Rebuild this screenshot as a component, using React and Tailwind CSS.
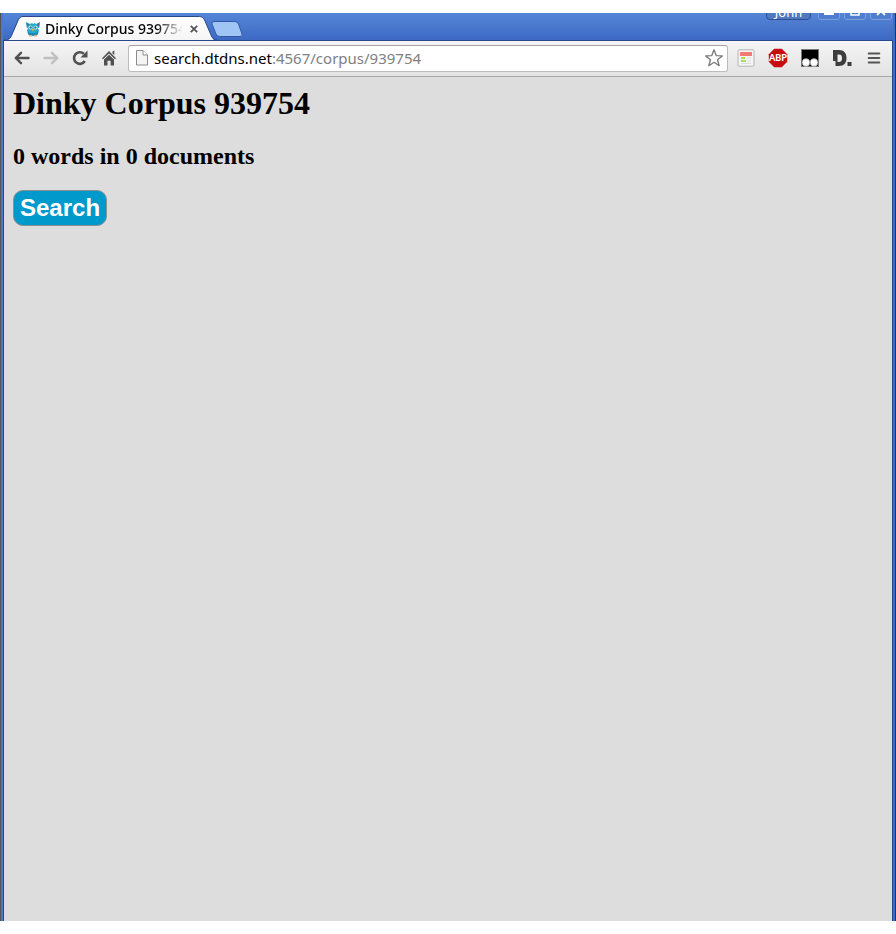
import React from "react";

function TabShape() {
  return (
    <svg className="absolute left-0 top-0" width="214" height="25" viewBox="0 0 214 25" aria-hidden="true">
      <defs>
        <linearGradient id="tab" x1="0" y1="0" x2="0" y2="1">
          <stop offset="0" stopColor="#ffffff" />
          <stop offset="1" stopColor="#f5f5f5" />
        </linearGradient>
      </defs>
      <path
        d="M0 25 V24 C4 24 6 23.500 7.500 20 L14 5 C15.500 1.500 17 .5 20 .5 H194 C198 .5 199.500 1.500 201 5 L207 19 C208.500 23 209.500 24.500 213 24.500 V25 Z"
        fill="url(#tab)"
      />
      <path
        d="M0 24 C4 24 6 23 7.500 19.500 L14 4.500 C15.500 1 17 .5 20 .5 H194 C198 .5 199.500 1.500 201 5 L207 19 C208.500 22.500 210 24 213 24"
        fill="none"
        stroke="#27488c"
      />
    </svg>
  );
}

function Furby() {
  return (
    <svg width="16" height="16" viewBox="0 0 16 16" aria-hidden="true">
      <path d="M1 1 L5 3 L7 2 L8 3 L9.500 2 L11 3 L15 1 L14.500 6 L13 7.500 L14 9.500 L13 13 L11 15 H5 L3 13 L2 9.500 L3 7.500 L1.500 6 Z" fill="#27a9cd" />
      <path d="M1.500 1.500 L4 3.500 L2.500 5.500 Z M14.500 1.500 L12 3.500 L13.500 5.500 Z" fill="#6e5c78" />
      <path d="M3 10 V13 L5 14.500 H11 L13 13 V10 L11 12 H5 Z" fill="#168bb5" />
      <circle cx="5.500" cy="6.500" r="2" fill="#d5f1f7" />
      <circle cx="10.500" cy="6.500" r="2" fill="#d5f1f7" />
      <circle cx="5.700" cy="6.500" r="1.200" fill="#278397" />
      <circle cx="10.300" cy="6.500" r="1.200" fill="#278397" />
      <path d="M6.500 8 H9.500 L8 10.500 Z" fill="#f5b31f" />
      <path d="M4 14 H7 V15.500 H4 Z M9 14 H12 V15.500 H9 Z" fill="#dfb27d" />
    </svg>
  );
}

function WindowButton({ label, children }) {
  return (
    <button aria-label={label} className="flex h-[20px] w-[22px] items-end justify-center rounded-b-[3px] border border-[#7f9fd8] bg-[#4f7dd0] pb-[3px]">
      {children}
    </button>
  );
}

function TitleBar() {
  return (
    <header className="flex h-[28px] items-end justify-between overflow-hidden border-b border-[#27488c] bg-gradient-to-b from-[#5586d6] to-[#3d69c4] pl-px pr-px">
      <div className="-mb-px flex items-end">
        <div className="relative h-[25px] w-[209px]">
          <TabShape />
          <div className="relative flex h-[26px] items-center pl-[21px]">
            <Furby />
            <span className="ml-[4px] w-[138px] overflow-hidden whitespace-nowrap bg-gradient-to-r from-black from-80% to-transparent bg-clip-text font-['Noto_Sans','Open_Sans',sans-serif] text-[14px] font-medium leading-[20px] text-transparent">
              Dinky Corpus 939754
            </span>
            <button aria-label="Close tab" className="ml-[6px] flex size-[10px] items-center justify-center">
              <svg width="8" height="8" viewBox="0 0 8 8" stroke="#555" strokeWidth="1.800">
                <path d="M.8 .8 L7.200 7.200 M7.200 .8 L.8 7.200" />
              </svg>
            </button>
          </div>
        </div>
        <button aria-label="New tab" className="mb-[4px] -ml-[3px]">
          <svg width="34" height="16" viewBox="0 0 34 16">
            <path d="M4 .5 H25 Q27.500 .5 28.500 3 L32 13 Q33 15.500 30 15.500 H10 Q7 15.500 6 13 L2 3 Q1.500 .5 4 .5 Z" fill="#9fc5f4" stroke="#3159a8" />
          </svg>
        </button>
      </div>
      <div className="mb-[20px] flex items-end gap-[4px]">
        <button className="mr-[3px] flex h-[20px] w-[45px] items-end justify-center rounded-b-[4px] border border-[#2c4d91] bg-[#5079c0] font-['Noto_Sans','Open_Sans',sans-serif] text-[13px] leading-[14px] text-white">
          John
        </button>
        <WindowButton label="Minimize">
          <svg width="10" height="4"><path d="M0 0 H10 V3 H0 Z" fill="#fff" /></svg>
        </WindowButton>
        <WindowButton label="Maximize">
          <svg width="10" height="9" fill="none" stroke="#fff" strokeWidth="1.500"><rect x="1" y="1" width="8" height="7" /></svg>
        </WindowButton>
        <WindowButton label="Close">
          <svg width="10" height="10" stroke="#fff" strokeWidth="1.800"><path d="M1 1 L9 9 M9 1 L1 9" /></svg>
        </WindowButton>
      </div>
    </header>
  );
}

function Tool({ label, children, disabled }) {
  return (
    <button aria-label={label} disabled={disabled} className="flex size-[20px] shrink-0 items-center justify-center">
      {children}
    </button>
  );
}

function Toolbar() {
  return (
    <div className="flex h-[36px] items-center border-b border-[#a8a8a8] bg-gradient-to-b from-[#f5f5f5] to-[#e3e3e3] pb-px pl-[8px] pr-[8px]">
      <nav className="flex gap-[9px]">
        <Tool label="Back">
          <svg width="16" height="14" viewBox="0 0 16 14" fill="none" stroke="#505050" strokeWidth="2.400" strokeLinecap="round">
            <path d="M2 7 H14.500" /><path d="M7 1.800 L1.800 7 L7 12.200" strokeLinejoin="round" />
          </svg>
        </Tool>
        <Tool label="Forward" disabled>
          <svg width="16" height="14" viewBox="0 0 16 14" fill="none" stroke="#c0c0c0" strokeWidth="2.400" strokeLinecap="round">
            <path d="M1.500 7 H14" /><path d="M9 1.800 L14.200 7 L9 12.200" strokeLinejoin="round" />
          </svg>
        </Tool>
        <Tool label="Reload">
          <svg width="16" height="16" viewBox="0 0 16 16">
            <path d="M12.800 11 A5.800 5.800 0 1 1 11.800 3.800" fill="none" stroke="#505050" strokeWidth="2.600" />
            <path d="M15.500 .5 V7.500 H8.500 Z" fill="#505050" />
          </svg>
        </Tool>
        <Tool label="Home">
          <svg width="16" height="16" viewBox="0 0 16 16" fill="#505050">
            <path d="M8 1 L15 8.200 L14 9.300 L8 3.400 L2 9.300 L1 8.200 Z" />
            <path d="M8 4.800 L13 9.500 V15.500 H9.600 V10.800 H6.500 V15.500 H3 V9.500 Z M11.500 1.500 L13.300 .5 V5 L11.500 3.500 Z" />
          </svg>
        </Tool>
      </nav>
      <form onSubmit={(e) => e.preventDefault()} className="ml-[9px] flex h-[27px] min-w-0 flex-1 items-center rounded-[3px] border border-[#bcbcbc] border-t-[#a4a4a4] bg-white pl-[7px] pr-[3px] font-['Noto_Sans','Open_Sans',sans-serif] text-[15px] leading-[20px]">
        <svg className="shrink-0" width="12" height="16" viewBox="0 0 12 16" fill="#f4f4f4" stroke="#8c8c8c">
          <path d="M.5 .5 H7 L11.500 5 V15 H.5 Z" /><path d="M7 .5 V5 H11.500" fill="#fff" />
        </svg>
        <label htmlFor="address" className="ml-[6px] text-black">search.dtdns.net</label>
        <input id="address" defaultValue=":4567/corpus/939754" className="min-w-0 flex-1 bg-transparent text-[#808080] outline-none" />
        <Tool label="Bookmark this page">
          <svg width="18" height="18" viewBox="0 0 18 18" fill="#fff" stroke="#777" strokeWidth="1.300" strokeLinejoin="round">
            <path d="M9 .8 L11.200 6.600 L17.300 6.900 L12.500 10.700 L14.200 16.700 L9 13.300 L3.800 16.700 L5.500 10.700 L.7 6.900 L6.800 6.600 Z" />
          </svg>
        </Tool>
      </form>
      <div className="ml-[8px] flex gap-[12px]">
        <Tool label="Page notes">
          <svg width="18" height="18" viewBox="0 0 18 18">
            <rect x="1" y=".8" width="16" height="16.400" rx="1" fill="#f5f5f5" stroke="#b4b4b4" />
            <rect x="3" y="3" width="12" height="4" fill="#f27b74" />
            <path d="M4 9 H8 M4 12 H9" stroke="#a5e055" strokeWidth="1.800" />
            <path d="M10 9 H14 M10 12 H14 M4 14.500 H14" stroke="#dedede" />
          </svg>
        </Tool>
        <Tool label="Adblock Plus">
          <svg width="20" height="20" viewBox="0 0 20 20">
            <path d="M6.200 .8 H13.800 L19.200 6.200 V13.800 L13.800 19.200 H6.200 L.8 13.800 V6.200 Z" fill="#c70d0d" />
            <text x="10" y="13.300" textAnchor="middle" fill="#fff" fontFamily="Lato" fontWeight="900" fontSize="9">ABP</text>
          </svg>
        </Tool>
        <Tool label="Scripts">
          <svg width="18" height="18" viewBox="0 0 18 18">
            <rect x=".5" y=".5" width="17" height="17" fill="#000" stroke="#777" />
            <circle cx="5" cy="13.500" r="3.900" fill="#fff" stroke="#777" strokeWidth=".5" />
            <circle cx="13" cy="13.500" r="3.900" fill="#fff" stroke="#777" strokeWidth=".5" />
          </svg>
        </Tool>
        <Tool label="Disconnect">
          <svg width="20" height="16" viewBox="0 0 20 16">
            <path fillRule="evenodd" d="M1 0 H7 C12 0 14.500 3 14.500 8 S12 16 7 16 H3.500 V11 H1 Z M5.500 4.500 V12 H7 C9 12 10 10.800 10 8.200 S9 4.500 7 4.500 Z" fill="#3d3d3d" />
            <rect x="15.500" y="12" width="4" height="4" fill="#3d3d3d" />
          </svg>
        </Tool>
        <Tool label="Menu">
          <svg width="14" height="14" viewBox="0 0 14 14" stroke="#555" strokeWidth="2.200" strokeLinecap="round">
            <path d="M1.800 2.500 H12.200 M1.800 7 H12.200 M1.800 11.500 H12.200" />
          </svg>
        </Tool>
      </div>
    </div>
  );
}

export default function App() {
  return (
    <div className="flex min-h-screen flex-col bg-white py-[13px]">
      <div className="flex flex-1 flex-col border-l border-r border-l-[#555] border-r-[#333]">
        <div className="flex flex-1 flex-col border-l-2 border-r-2 border-l-[#4a78cc] border-r-[#3f6cc4]">
          <TitleBar />
          <div className="flex flex-1 flex-col border-l border-r border-[#27488c]">
            <Toolbar />
            <main className="flex-1 bg-[#dddddd] px-[9px] py-[8px] font-['Liberation_Serif','Times_New_Roman',serif] text-black">
              <h1 className="text-[32px] font-bold leading-[36px]">Dinky Corpus 939754</h1>
              <h2 className="mt-[22px] text-[24px] font-bold leading-[27px]">0 words in 0 documents</h2>
              <button className="mt-[20px] h-[36px] rounded-[10px] border border-[#8a8f92] bg-[#0099cc] px-[6px] font-['Liberation_Sans',Arial,sans-serif] text-[24px] font-bold leading-[28px] text-white">
                Search
              </button>
            </main>
          </div>
        </div>
      </div>
    </div>
  );
}
